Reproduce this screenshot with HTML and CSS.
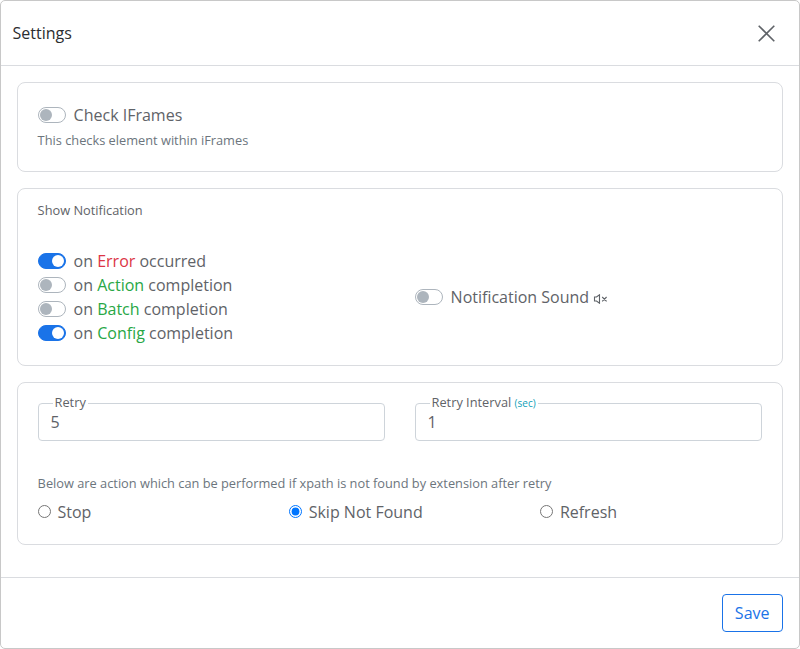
FILE: index.html
```html
<!DOCTYPE html>
<html lang="en">
<head>
<meta charset="utf-8">
<title>Settings</title>
<link rel="stylesheet" href="styles.css">
</head>
<body>
<div class="modal">
  <header class="modal-header">
    <h1 class="title">Settings</h1>
    <button class="close" type="button" aria-label="Close">
      <svg width="17" height="17" viewBox="0 0 17 17"><path d="M.7.7l15.6 15.6M16.3.7L.7 16.3" fill="none" stroke="currentColor" stroke-width="1.6"/></svg>
    </button>
  </header>
  <main class="modal-body">
    <section class="card card-frames">
      <label class="switch"><input type="checkbox"><span>Check IFrames</span></label>
      <p class="hint frames-hint">This checks element within iFrames</p>
    </section>
    <section class="card card-notify">
      <h2 class="subtitle">Show Notification</h2>
      <div class="columns">
        <div>
          <label class="switch"><input type="checkbox" checked><span>on <span class="danger">Error</span> occurred</span></label>
          <label class="switch"><input type="checkbox"><span>on <span class="success">Action</span> completion</span></label>
          <label class="switch"><input type="checkbox"><span>on <span class="success">Batch</span> completion</span></label>
          <label class="switch"><input type="checkbox" checked><span>on <span class="success">Config</span> completion</span></label>
        </div>
        <label class="switch"><input type="checkbox"><span>Notification Sound <svg class="mute" width="15" height="10" viewBox="0 0 15 10"><path d="M1.5 3h2L6.5.8v8.4L3.5 7h-2zM9.2 3l4.4 4.4M13.6 3L9.2 7.4" fill="none" stroke="currentColor" stroke-width="1.1"/></svg></span></label>
      </div>
    </section>
    <section class="card card-retry">
      <div class="columns">
        <div class="field">
          <input class="control" id="retry" type="text" value="5">
          <label class="field-label" for="retry">Retry</label>
        </div>
        <div class="field">
          <input class="control" id="interval" type="text" value="1">
          <label class="field-label" for="interval">Retry Interval <small class="unit">(sec)</small></label>
        </div>
      </div>
      <p class="hint retry-hint">Below are action which can be performed if xpath is not found by extension after retry</p>
      <div class="radios">
        <label class="radio"><input type="radio" name="after"><span>Stop</span></label>
        <label class="radio"><input type="radio" name="after" checked><span>Skip Not Found</span></label>
        <label class="radio"><input type="radio" name="after"><span>Refresh</span></label>
      </div>
    </section>
  </main>
  <footer class="modal-footer">
    <button class="save" type="button">Save</button>
  </footer>
</div>
</body>
</html>
```
FILE: styles.css
```css
* { box-sizing: border-box; }
body {
  margin: 0;
  font: 400 16px/24px "Open Sans", sans-serif;
  color: #5f6368;
  background: #fff;
}
h1, h2, p { margin: 0; font-weight: 400; }
.modal {
  display: flex;
  flex-direction: column;
  height: 649px;
  border: 1px solid #c8c8c8;
  border-radius: 5px;
}
.modal-header {
  display: flex;
  align-items: center;
  justify-content: space-between;
  height: 65px;
  padding: 0 24px 0 11.5px;
  border-bottom: 1px solid #dadce0;
}
.title { font-size: 16px; color: #2b2d30; }
.close {
  display: flex;
  padding: 0;
  border: 0;
  background: none;
  color: #5f6368;
}
.modal-body {
  flex: 1;
  display: flex;
  flex-direction: column;
  gap: 16px;
  padding: 16px;
}
.card {
  border: 1px solid #dadce0;
  border-radius: 8px;
  padding: 20px;
}
.card-frames { height: 90px; }
.card-notify { height: 178px; padding-top: 9px; }
.card-retry { height: 163px; }
.switch { display: flex; align-items: center; gap: 7.6px; height: 24px; }
.switch input {
  appearance: none;
  display: flex;
  align-items: center;
  width: 28px;
  height: 16px;
  margin: 0;
  padding: 0 1px;
  border: 1px solid #adb5bd;
  border-radius: 8px;
}
.switch input::before {
  content: "";
  width: 12px;
  height: 12px;
  border-radius: 50%;
  background: #adb5bd;
}
.switch input:checked {
  justify-content: flex-end;
  border-color: #1a73e8;
  background: #1a73e8;
}
.switch input:checked::before { background: #fff; }
.hint { margin-left: -0.4px; font-size: 12.8px; color: #6c757d; }
.frames-hint { margin-top: 1px; }
.subtitle { margin-left: -0.4px; font-size: 12.8px; line-height: 24px; }
.mute { vertical-align: -1px; }
.columns {
  display: grid;
  grid-template-columns: 1fr 1fr;
  gap: 30px;
  align-items: center;
}
.card-notify .columns { margin-top: 27px; }
.danger { color: #dc3545; }
.success { color: #28a745; }
.field { position: relative; height: 38px; }
.control {
  display: block;
  width: 100%;
  height: 38px;
  padding: 6px 11.5px;
  border: 1px solid #ced4da;
  border-radius: 4px;
  font: inherit;
  color: #5f6368;
}
.field-label {
  position: absolute;
  left: 15px;
  top: -10px;
  padding: 0 2px 0 1.5px;
  background: #fff;
  font-size: 12.8px;
  line-height: 19px;
}
.unit { font-size: 10px; font-weight: 500; color: #0fa0b8; }
.retry-hint { margin-top: 30px; }
.radios { display: grid; grid-template-columns: repeat(3, 251.2px); margin-top: 5px; }
.radio { display: flex; align-items: center; gap: 6.5px; }
.radio input { width: 13px; height: 13px; margin: 0 0 2px; }
.modal-footer {
  display: flex;
  align-items: center;
  justify-content: flex-end;
  height: 71px;
  padding-right: 16px;
  border-top: 1px solid #dadce0;
}
.save {
  height: 38px;
  padding: 0 12.5px 0 11.5px;
  border: 1px solid #1a73e8;
  border-radius: 4px;
  background: #fff;
  font: inherit;
  color: #1a73e8;
}
```
